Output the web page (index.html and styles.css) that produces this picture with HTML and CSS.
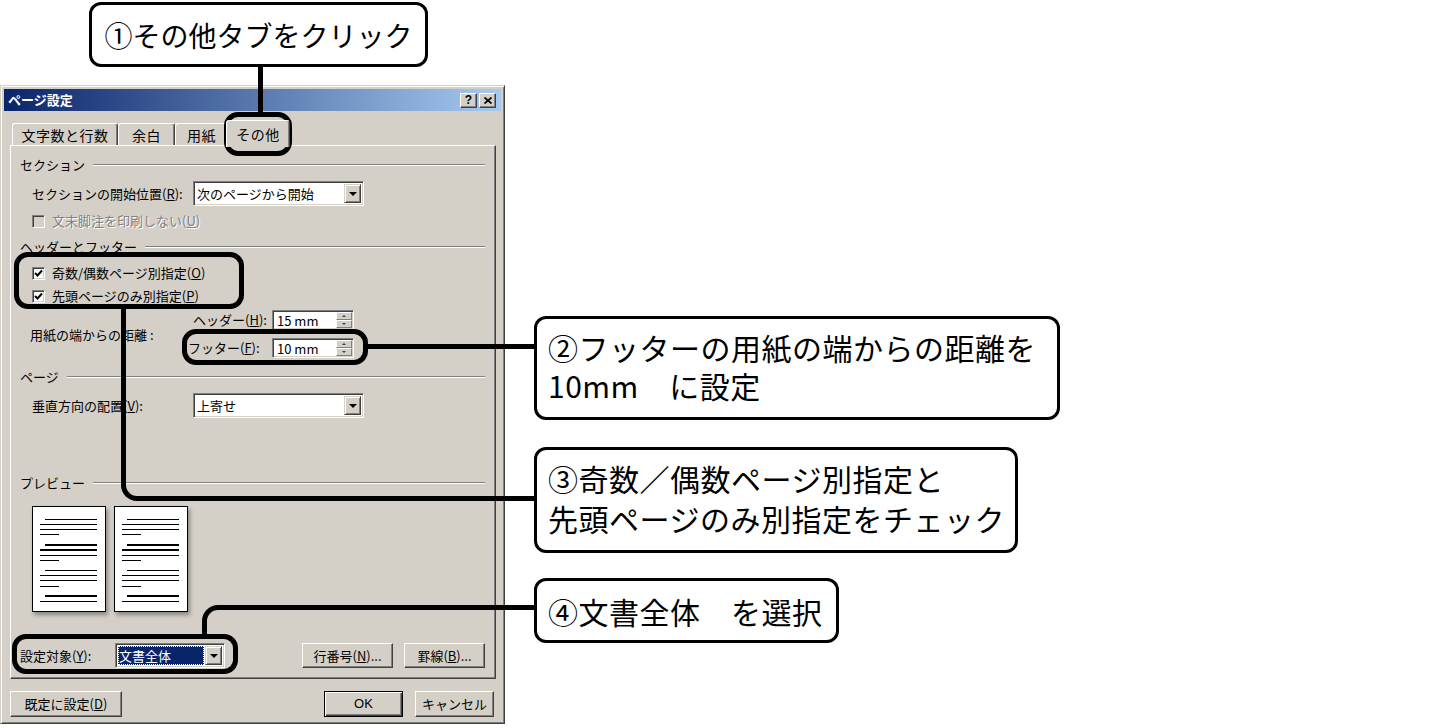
FILE: index.html
```html
<!DOCTYPE html>
<html lang="ja">

<head>
    <meta charset="UTF-8">
    <meta name="viewport" content="width=device-width, initial-scale=1.0">
    <title>ページ設定</title>
    <link rel="stylesheet" href="styles.css">
</head>

<body>
    <div class="stage">
        <div class="dialog">
            <div class="titlebar">
                <span class="title">ページ設定</span>
                <div class="tbtns">
                    <span class="tbtn help">?</span>
                    <span class="tbtn"><svg width="8" height="7" viewBox="0 0 8 7"><path d="M0.5 0.5L7.5 6.5M7.5 0.5L0.5 6.5" stroke="#000" stroke-width="1.7"/></svg></span>
                </div>
            </div>

            <div class="tabs">
                <span class="tab t1">文字数と行数</span>
                <span class="tab t2">余白</span>
                <span class="tab t3">用紙</span>
                <span class="tab active">その他</span>
            </div>

            <div class="panel">
                <div class="group">セクション</div>
                <div class="row r-start">
                    <span class="lbl">セクションの開始位置(<u>R</u>):</span>
                    <div class="combo"><span class="val">次のページから開始</span><span class="drop"></span></div>
                </div>
                <div class="check disabled r-endnote">
                    <span class="box"></span>
                    <span>文末脚注を印刷しない(<u>U</u>)</span>
                </div>

                <div class="group r-hf">ヘッダーとフッター</div>
                <div class="check r-odd">
                    <span class="box"><svg width="9" height="9" viewBox="0 0 9 9"><path d="M1 4L3.5 6.5L8 1.5" stroke="#000" stroke-width="2" fill="none"/></svg></span>
                    <span>奇数/偶数ページ別指定(<u>O</u>)</span>
                </div>
                <div class="check r-first">
                    <span class="box"><svg width="9" height="9" viewBox="0 0 9 9"><path d="M1 4L3.5 6.5L8 1.5" stroke="#000" stroke-width="2" fill="none"/></svg></span>
                    <span>先頭ページのみ別指定(<u>P</u>)</span>
                </div>
                <div class="dist">
                    <span class="dlbl">用紙の端からの距離 :</span>
                    <div class="spins">
                        <div class="spinrow">
                            <span class="slbl first">ヘッダー(<u>H</u>):</span>
                            <div class="spin"><span class="val">15 mm</span><div class="updown"><span class="up"></span><span class="dn"></span></div></div>
                        </div>
                        <div class="spinrow">
                            <span class="slbl">フッター(<u>F</u>):</span>
                            <div class="spin"><span class="val">10 mm</span><div class="updown"><span class="up"></span><span class="dn"></span></div></div>
                        </div>
                    </div>
                </div>

                <div class="group r-page">ページ</div>
                <div class="row r-valign">
                    <span class="lbl">垂直方向の配置(<u>V</u>):</span>
                    <div class="combo"><span class="val">上寄せ</span><span class="drop"></span></div>
                </div>

                <div class="group r-preview">プレビュー</div>
                <div class="previews">
                    <div class="sheet">
                        <svg width="74" height="106" viewBox="0 0 74 106" shape-rendering="crispEdges">
                            <rect x="0.5" y="0.5" width="73" height="105" fill="#fff" stroke="#000"/>
                            <g stroke="#000">
                                <path d="M13 13.5H65M8 18.5H65M8 23.5H65M8 28.5H27"/>
                                <path d="M13 39H65M8 44H65" stroke-width="2"/>
                                <path d="M8 49.5H65M8 54.5H27M13 64.5H65M8 69.5H65M8 74.5H65M8 80.5H27"/>
                                <path d="M13 90H65" stroke-width="2"/>
                                <path d="M8 95.5H65"/>
                            </g>
                        </svg>
                    </div>
                    <div class="sheet">
                        <svg width="74" height="106" viewBox="0 0 74 106" shape-rendering="crispEdges">
                            <rect x="0.5" y="0.5" width="73" height="105" fill="#fff" stroke="#000"/>
                            <g stroke="#000">
                                <path d="M13 13.5H65M8 18.5H65M8 23.5H65M8 28.5H27"/>
                                <path d="M13 39H65M8 44H65" stroke-width="2"/>
                                <path d="M8 49.5H65M8 54.5H27M13 64.5H65M8 69.5H65M8 74.5H65M8 80.5H27"/>
                                <path d="M13 90H65" stroke-width="2"/>
                                <path d="M8 95.5H65"/>
                            </g>
                        </svg>
                    </div>
                </div>

                <div class="target">
                    <span class="tlbl">設定対象(<u>Y</u>):</span>
                    <div class="combo small"><span class="val sel">文書全体</span><span class="drop"></span></div>
                    <span class="btn b-line">行番号(<u>N</u>)...</span>
                    <span class="btn b-border">罫線(<u>B</u>)...</span>
                </div>
            </div>

            <div class="actions">
                <span class="btn b-default">既定に設定(<u>D</u>)</span>
                <span class="btn b-ok">OK</span>
                <span class="btn b-cancel">キャンセル</span>
            </div>
        </div>

        <!-- annotations -->
        <div class="ring ring-tab"></div>
        <div class="ring ring-checks"></div>
        <div class="ring ring-footer"></div>
        <div class="ring ring-target"></div>

        <div class="wire w1"></div>
        <div class="wire w2"></div>
        <div class="wire w3"></div>
        <div class="wire w4"></div>

        <div class="callout c1">①その他タブをクリック</div>
        <div class="callout c2"><span class="ln">②フッターの用紙の端からの距離を</span><span class="ln">10mm　に設定</span></div>
        <div class="callout c3"><span class="ln">③奇数／偶数ページ別指定と</span><span class="ln">先頭ページのみ別指定をチェック</span></div>
        <div class="callout c4">④文書全体　を選択</div>
    </div>
</body>

</html>
```

FILE: styles.css
```css
* {
    box-sizing: border-box;
}

body {
    margin: 0;
    background: #fff;
    font-family: "Noto Sans CJK JP", "Liberation Sans", sans-serif;
}

.stage {
    position: relative;
    width: 1435px;
    height: 728px;
    overflow: hidden;
    padding-top: 85px;
}

/* dialog window */

.dialog {
    width: 505px;
    background: #d4d0c8;
    border: 1px solid;
    border-color: #d4d0c8 #404040 #404040 #d4d0c8;
    box-shadow: inset 1px 1px #fff, inset -1px -1px #808080;
    padding: 3px 3px 6px;
    font-size: 13px;
    line-height: 16px;
    color: #000;
}

u {
    text-decoration: underline;
    text-underline-offset: 1px;
}

.titlebar {
    height: 22px;
    display: flex;
    align-items: center;
    justify-content: space-between;
    padding-left: 4px;
    padding-right: 5px;
    background: linear-gradient(to right, #0a246a, #a6caf0);
    color: #fff;
    font-weight: bold;
}

.tbtns {
    display: flex;
    gap: 2px;
}

.tbtn {
    width: 17px;
    height: 15px;
    display: flex;
    align-items: center;
    justify-content: center;
    background: #d4d0c8;
    border: 1px solid;
    border-color: #fff #404040 #404040 #fff;
    box-shadow: inset -1px -1px #808080;
    color: #000;
    font-size: 12px;
    font-family: "Liberation Sans", sans-serif;
    font-weight: bold;
}

.tabs {
    height: 34px;
    display: flex;
    align-items: flex-end;
    padding-left: 8px;
}

.tab {
    height: 22px;
    display: flex;
    align-items: center;
    justify-content: center;
    border: 1px solid;
    border-bottom: none;
    border-color: #fff #404040 transparent #fff;
    box-shadow: inset -1px 0 #808080;
    border-radius: 3px 3px 0 0;
    font-size: 14px;
    letter-spacing: 0.5px;
}

.t1 {
    width: 106px;
}

.t2 {
    width: 57px;
}

.t3 {
    width: 53px;
}

.tab.active {
    width: 64px;
    height: 27px;
    margin-left: -2px;
    margin-bottom: -2px;
    position: relative;
    z-index: 1;
    background: #d4d0c8;
}

.panel {
    margin-left: 6px;
    width: 486px;
    border: 1px solid;
    border-color: #fff #404040 #404040 #fff;
    box-shadow: inset -1px -1px #808080;
    padding: 11px 10px 10px 9px;
}

.group {
    height: 16px;
    display: flex;
    align-items: center;
}

.group::after {
    content: "";
    flex: 1;
    margin-left: 8px;
    border-top: 1px solid #808080;
    border-bottom: 1px solid #fff;
}

.row {
    display: flex;
    align-items: center;
    padding-left: 12px;
}

.lbl {
    width: 161px;
}

.r-start {
    margin-top: 8px;
}

.r-endnote {
    margin-top: 7px;
}

.r-hf {
    margin-top: 10px;
}

.r-odd {
    margin-top: 10px;
}

.r-first {
    margin-top: 7px;
}

.r-page {
    margin-top: 11px;
}

.r-valign {
    margin-top: 8px;
}

.r-preview {
    margin-top: 57px;
}

/* combo boxes */

.combo {
    width: 171px;
    height: 25px;
    display: flex;
    align-items: center;
    justify-content: space-between;
    background: #fff;
    border: 1px solid;
    border-color: #808080 #fff #fff #808080;
    box-shadow: inset 1px 1px #404040, inset -1px -1px #d4d0c8;
    padding: 2px;
}

.combo .val {
    padding-left: 1px;
}

.drop {
    width: 17px;
    height: 19px;
    display: flex;
    align-items: center;
    justify-content: center;
    background: #d4d0c8;
    border: 1px solid;
    border-color: #d4d0c8 #404040 #404040 #d4d0c8;
    box-shadow: inset 1px 1px #fff, inset -1px -1px #808080;
}

.drop::after {
    content: "";
    border-left: 4px solid transparent;
    border-right: 4px solid transparent;
    border-top: 4px solid #000;
    margin-top: 1px;
}

/* check boxes */

.check {
    height: 16px;
    display: flex;
    align-items: center;
    gap: 7px;
    padding-left: 12px;
}

.box {
    width: 13px;
    height: 13px;
    display: flex;
    align-items: center;
    justify-content: center;
    background: #fff;
    border: 1px solid;
    border-color: #808080 #fff #fff #808080;
    box-shadow: inset 1px 1px #404040, inset -1px -1px #d4d0c8;
}

.check.disabled {
    color: #808080;
    text-shadow: 1px 1px #fff;
}

.check.disabled .box {
    background: #d4d0c8;
}

/* distance spinners */

.dist {
    margin-top: 6px;
    height: 48px;
    display: flex;
    align-items: center;
    padding-left: 10px;
}

.dlbl {
    width: 158px;
    padding-top: 2px;
}

.spins {
    display: flex;
    flex-direction: column;
    gap: 8px;
}

.spinrow {
    height: 20px;
    display: flex;
    align-items: center;
}

.slbl {
    width: 84px;
}

.slbl.first {
    padding-left: 5px;
}

.spin {
    width: 82px;
    height: 20px;
    display: flex;
    align-items: stretch;
    justify-content: space-between;
    background: #fff;
    border: 1px solid;
    border-color: #808080 #fff #fff #808080;
    box-shadow: inset 1px 1px #404040, inset -1px -1px #d4d0c8;
    padding: 1px;
}

.spin .val {
    padding-left: 3px;
    line-height: 17px;
}

.updown {
    width: 16px;
    display: flex;
    flex-direction: column;
}

.up,
.dn {
    flex: 1;
    display: flex;
    align-items: center;
    justify-content: center;
    background: #d4d0c8;
    border: 1px solid;
    border-color: #fff #808080 #808080 #fff;
}

.up::after {
    content: "";
    border-left: 2px solid transparent;
    border-right: 2px solid transparent;
    border-bottom: 2px solid #404040;
}

.dn::after {
    content: "";
    border-left: 2px solid transparent;
    border-right: 2px solid transparent;
    border-top: 2px solid #404040;
}

/* preview */

.previews {
    margin-top: 15px;
    display: flex;
    gap: 8px;
    padding-left: 12px;
}

.sheet {
    width: 74px;
    height: 106px;
    box-shadow: 2px 3px 4px rgba(0, 0, 0, 0.35);
}

.sheet svg {
    display: block;
}

/* bottom of the tab page */

.target {
    margin-top: 31px;
    height: 25px;
    display: flex;
    align-items: center;
}

.tlbl {
    width: 95px;
}

.combo.small {
    width: 110px;
}

.sel {
    background: #0a246a;
    color: #fff;
    outline: 1px dotted #fff;
    outline-offset: -1px;
    height: 19px;
    flex: 1;
    margin-right: 1px;
    line-height: 19px;
}

.btn {
    height: 25px;
    display: flex;
    align-items: center;
    justify-content: center;
    background: #d4d0c8;
    border: 1px solid;
    border-color: #fff #404040 #404040 #fff;
    box-shadow: inset -1px -1px #808080;
}

.b-line {
    width: 91px;
    margin-left: auto;
}

.b-border {
    width: 81px;
    margin-left: 11px;
}

.actions {
    margin-top: 12px;
    display: flex;
    padding: 0 7px 0 6px;
}

.actions .btn {
    height: 26px;
}

.b-default {
    width: 112px;
}

.b-ok {
    width: 79px;
    margin-left: auto;
    border: 1px solid #000;
    box-shadow: inset 1px 1px #fff, inset -1px -1px #404040, inset -2px -2px #808080;
    font-family: "Liberation Sans", sans-serif;
}

.b-cancel {
    width: 79px;
    margin-left: 12px;
}

/* annotations drawn over the screenshot */

.ring {
    position: absolute;
    border: 5px solid #000;
    border-radius: 14px;
}

.ring-tab {
    left: 224px;
    top: 112px;
    width: 68px;
    height: 44px;
}

.ring-checks {
    left: 14px;
    top: 252px;
    width: 230px;
    height: 57px;
}

.ring-footer {
    left: 182px;
    top: 329px;
    width: 186px;
    height: 36px;
}

.ring-target {
    left: 12px;
    top: 634px;
    width: 226px;
    height: 40px;
}

.wire {
    position: absolute;
    border-color: #000;
    border-style: solid;
    border-width: 0;
}

.w1 {
    left: 258px;
    top: 66px;
    width: 5px;
    height: 47px;
    background: #000;
}

.w2 {
    left: 367px;
    top: 344px;
    width: 168px;
    height: 5px;
    background: #000;
}

.w3 {
    left: 121px;
    top: 308px;
    width: 414px;
    height: 193px;
    border-left-width: 5px;
    border-bottom-width: 5px;
    border-bottom-left-radius: 16px;
}

.w4 {
    left: 202px;
    top: 605px;
    width: 333px;
    height: 30px;
    border-left-width: 5px;
    border-top-width: 5px;
    border-top-left-radius: 16px;
}

.callout {
    position: absolute;
    background: #fff;
    border: 3px solid #000;
    border-radius: 12px;
    color: #000;
    font-size: 30px;
    line-height: 38px;
    letter-spacing: 0.5px;
    padding-left: 11px;
    white-space: nowrap;
}

.callout .ln {
    display: block;
    height: 38px;
}

.c1 {
    left: 89px;
    top: 2px;
    width: 339px;
    height: 65px;
    font-size: 28px;
    letter-spacing: 0;
    display: flex;
    align-items: center;
    justify-content: center;
    padding-left: 0;
}

.c2 {
    left: 534px;
    top: 316px;
    width: 526px;
    height: 104px;
    padding-top: 9px;
}

.c3 {
    left: 534px;
    top: 447px;
    width: 484px;
    height: 106px;
    padding-top: 8px;
}

.c3 .ln {
    height: 40px;
    line-height: 40px;
}

.c4 {
    left: 534px;
    top: 578px;
    width: 305px;
    height: 65px;
    display: flex;
    align-items: center;
}
```
